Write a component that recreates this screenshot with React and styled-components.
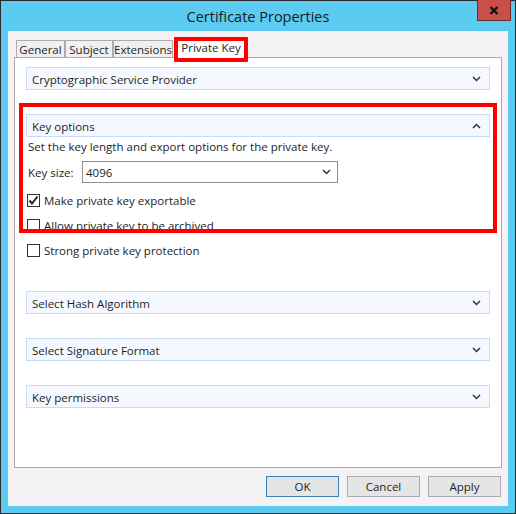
import React from 'react';
import styled, { createGlobalStyle } from 'styled-components';

const GlobalStyle = createGlobalStyle`
    html, body {
        margin: 0;
        padding: 0;
        background: #ffffff;
    }
    body {
        font-family: "Open Sans", "Noto Sans", "Liberation Sans", sans-serif;
        font-size: 11.5px;
        color: #1e1e1e;
    }
`;

const sections = ['Select Hash Algorithm', 'Select Signature Format', 'Key permissions'];

const Chevron = ({ up }) => (
    <svg width="9" height="6" viewBox="0 0 9 6">
        <polyline
            points={up ? '1,5 4.5,1.5 8,5' : '1,1 4.5,4.5 8,1'}
            fill="none"
            stroke="#333"
            strokeWidth="1.5"
        />
    </svg>
);

const CheckMark = () => (
    <svg width="11" height="11" viewBox="0 0 11 11">
        <polyline points="1.5,5.5 4,8.5 9.5,1.5" fill="none" stroke="#222" strokeWidth="2" />
    </svg>
);

const Section = ({ title, open }) => (
    <SectionHeader>
        <span>{title}</span>
        <Chevron up={open} />
    </SectionHeader>
);

const Check = ({ label, checked }) => (
    <CheckRow>
        <Box>{checked && <CheckMark />}</Box>
        <span>{label}</span>
    </CheckRow>
);

const App = () => {
    return (
        <>
            <GlobalStyle />
            <Window>
                <TitleBar>
                    <span />
                    <Title>Certificate Properties</Title>
                    <CloseButton>
                        <svg width="10" height="9" viewBox="0 0 10 9">
                            <path d="M1.5 1 L8.5 8 M8.5 1 L1.5 8" stroke="#111" strokeWidth="2.4" />
                        </svg>
                    </CloseButton>
                </TitleBar>
                <Client>
                    <Tabs>
                        <Tab $w={49}>General</Tab>
                        <Tab $w={48}>Subject</Tab>
                        <Tab $w={60}>Extensions</Tab>
                        <Tab $w={70} $active>Private Key</Tab>
                    </Tabs>
                    <Panel>
                        <Section title="Cryptographic Service Provider" />
                        <Highlight>
                            <Section title="Key options" open />
                            <Description>Set the key length and export options for the private key.</Description>
                            <KeySizeRow>
                                <span>Key size:</span>
                                <Select>
                                    <span>4096</span>
                                    <Chevron />
                                </Select>
                            </KeySizeRow>
                            <Check label="Make private key exportable" checked />
                            <Check label="Allow private key to be archived" />
                        </Highlight>
                        <Check label="Strong private key protection" />
                        <Spacer />
                        {sections.map((s) => (
                            <Section key={s} title={s} />
                        ))}
                    </Panel>
                    <Buttons>
                        <Button $default>OK</Button>
                        <Button>Cancel</Button>
                        <Button>Apply</Button>
                    </Buttons>
                </Client>
            </Window>
        </>
    );
};

const Window = styled.div`
    width: 516px;
    height: 514px;
    box-sizing: border-box;
    border: 1px solid #2b2b2b;
    background-color: #5bcbf2;
    display: flex;
    flex-direction: column;
`;

const TitleBar = styled.div`
    height: 30px;
    display: grid;
    grid-template-columns: 1fr auto 1fr;
    align-items: start;
`;

const Title = styled.div`
    font-size: 14.5px;
    line-height: 31px;
    color: #1a1a1a;
`;

const CloseButton = styled.div`
    justify-self: end;
    margin-top: -1px;
    margin-right: 4px;
    width: 32px;
    height: 20px;
    background-color: #c7504b;
    border: 1px solid #6e2a26;
    border-top: none;
    display: flex;
    align-items: center;
    justify-content: center;
`;

const Client = styled.div`
    flex: 1;
    margin: 0 7px 7px 7px;
    background-color: #f5f2f5;
    padding: 6px 6px 0 6px;
    display: flex;
    flex-direction: column;
`;

const Tabs = styled.div`
    display: flex;
    align-items: flex-end;
    height: 21px;
    padding-left: 2px;
    position: relative;
    z-index: 1;
    margin-bottom: -1px;
`;

const Tab = styled.div`
    position: relative;
    box-sizing: border-box;
    width: ${(p) => p.$w}px;
    height: ${(p) => (p.$active ? 22 : 18)}px;
    margin-left: ${(p) => (p.$active ? 3 : 0)}px;
    margin-bottom: ${(p) => (p.$active ? -1 : 0)}px;
    border: 1px solid #acacac;
    border-bottom: ${(p) => (p.$active ? 'none' : '1px solid #acacac')};
    background-color: ${(p) => (p.$active ? '#ffffff' : '#f0f0f0')};
    display: flex;
    align-items: ${(p) => (p.$active ? 'flex-start' : 'center')};
    justify-content: center;
    padding-top: ${(p) => (p.$active ? 2 : 0)}px;
    font-size: 11.5px;
    color: #1e1e1e;
    & + & {
        border-left: ${(p) => (p.$active ? '1px solid #acacac' : 'none')};
    }
    &::after {
        content: ${(p) => (p.$active ? "''" : 'none')};
        position: absolute;
        top: -1px;
        left: -3px;
        right: -3px;
        bottom: -3px;
        border: 4px solid #ff0000;
        border-radius: 1px;
    }
`;

const Panel = styled.div`
    height: 411px;
    box-sizing: border-box;
    background-color: #ffffff;
    border: 1px solid #acacac;
    padding: 9px 11px 0 11px;
    display: flex;
    flex-direction: column;
`;

const SectionHeader = styled.div`
    height: 23px;
    box-sizing: border-box;
    background-color: #f5f9ff;
    border: 1px solid #c8dcf6;
    display: flex;
    align-items: center;
    justify-content: space-between;
    padding: 1px 8px 0 5px;
    font-size: 11.5px;
    color: #1e1e1e;
    margin-bottom: 24px;
`;

const Highlight = styled.div`
    position: relative;
    display: flex;
    flex-direction: column;

    & > ${SectionHeader} {
        margin-bottom: 0;
    }

    &::after {
        content: '';
        position: absolute;
        top: -11px;
        left: -7px;
        right: -7px;
        bottom: 0;
        border: 4px solid #ff0000;
        pointer-events: none;
    }
`;

const Description = styled.div`
    height: 16px;
    line-height: 16px;
    padding: 2px 0 0 2px;
`;

const KeySizeRow = styled.div`
    display: flex;
    align-items: center;
    margin-top: 6px;
    padding-left: 2px;

    & > span {
        width: 54px;
    }
`;

const Select = styled.div`
    width: 256px;
    height: 22px;
    box-sizing: border-box;
    border: 1px solid #8f8f8f;
    background: #ffffff;
    display: flex;
    align-items: center;
    justify-content: space-between;
    padding: 0 6px 0 3px;
`;

const CheckRow = styled.div`
    display: flex;
    align-items: center;
    gap: 4px;
    height: 16px;
    margin-top: 9px;
    padding-left: 1px;
`;

const Box = styled.div`
    width: 13px;
    height: 13px;
    box-sizing: border-box;
    border: 1px solid #333;
    background: #ffffff;
    display: flex;
    align-items: center;
    justify-content: center;
`;

const Spacer = styled.div`
    height: 33px;
`;

const Buttons = styled.div`
    display: flex;
    justify-content: flex-end;
    gap: 8px;
    margin-top: 8px;
    padding-right: 1px;
`;

const Button = styled.div`
    width: 73px;
    height: 21px;
    box-sizing: border-box;
    background-color: #e5e5e5;
    border: 1px solid ${(p) => (p.$default ? '#3c7fb1' : '#acacac')};
    display: flex;
    align-items: center;
    justify-content: center;
    font-size: 11.5px;
    color: #1e1e1e;
`;

export default App;
